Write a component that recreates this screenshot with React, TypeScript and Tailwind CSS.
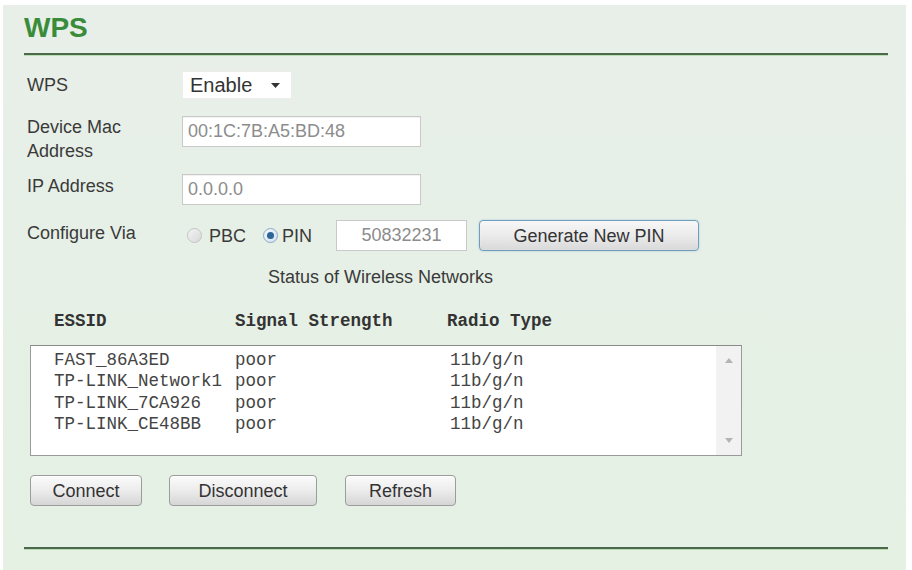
import React from "react";

const rows = [
  ["FAST_86A3ED", "poor", "11b/g/n"],
  ["TP-LINK_Network1", "poor", "11b/g/n"],
  ["TP-LINK_7CA926", "poor", "11b/g/n"],
  ["TP-LINK_CE48BB", "poor", "11b/g/n"],
];

function Btn({ w, ml, children }: { w: string; ml: string; children: React.ReactNode }) {
  return (
    <button
      className={`${w} ${ml} h-[31px] rounded-[4px] border border-[#9c9c9c] bg-gradient-to-b from-[#fbfbfb] via-[#ececec] to-[#d6d6d6] text-[18px] leading-none text-[#333] shadow-[inset_0_1px_0_#fff]`}
    >
      {children}
    </button>
  );
}

export default function App() {
  return (
    <div className="w-[912px] h-[570px] overflow-hidden bg-white pt-[5px] pl-[3px] pr-[6px] font-['Liberation_Sans',Arial,sans-serif] text-[#3a3a3a]">
      <div className="h-full bg-gradient-to-b from-[#e8efe9] to-[#e4f1e3] pl-[21px] pr-[18px] pt-[8px]">
        <div className="text-[28px] leading-[30px] font-bold text-[#3a8c3a]">WPS</div>
        <div className="mt-[10px] h-[3px] border-t-2 border-[#4d694d] bg-[#b9ddb0]" />

        {/* WPS row */}
        <div className="mt-[15px] flex items-center">
          <div className="w-[158px] pl-[3px] text-[18px] leading-[24px]">WPS</div>
          <div className="flex h-[28px] w-[110px] items-center justify-between border border-[#ececec] bg-white pl-[7px] pr-[11px] text-[20px] text-[#333]">
            <span>Enable</span>
            <svg width="9" height="5" viewBox="0 0 9 5">
              <path d="M0 0H9L4.5 5Z" fill="#333" />
            </svg>
          </div>
        </div>

        {/* Mac row */}
        <div className="mt-[16px] flex items-start">
          <div className="w-[158px] pl-[3px] text-[18px] leading-[24px]">
            Device Mac
            <br />
            Address
          </div>
          <div className="mt-[1px] flex h-[31px] w-[239px] items-center border border-[#c9c9c9] bg-white pl-[5px] text-[18px] text-[#8c8c8c] shadow-[inset_0_1px_1px_rgba(0,0,0,0.06)]">
            00:1C:7B:A5:BD:48
          </div>
        </div>

        {/* IP row */}
        <div className="mt-[11px] flex items-start">
          <div className="w-[158px] pl-[3px] text-[18px] leading-[24px]">IP Address</div>
          <div className="flex h-[31px] w-[239px] items-center border border-[#c9c9c9] bg-white pl-[5px] text-[18px] text-[#8c8c8c] shadow-[inset_0_1px_1px_rgba(0,0,0,0.06)]">
            0.0.0.0
          </div>
        </div>

        {/* Configure row */}
        <div className="mt-[15px] flex items-center">
          <div className="w-[158px] pl-[3px] pb-[5px] text-[18px] leading-[24px]">Configure Via</div>
          <div className="ml-[5px] h-[15px] w-[15px] rounded-full border border-[#c4c4c4] bg-gradient-to-br from-[#f4f4f4] to-[#d8d8d8]" />
          <span className="ml-[7px] text-[18px] leading-[24px]">PBC</span>
          <div className="ml-[17px] flex h-[15px] w-[15px] items-center justify-center rounded-full border border-[#8aa9c4] bg-gradient-to-br from-[#f4f8fb] to-[#d4e2ee]">
            <div className="h-[7px] w-[7px] rounded-full bg-[#2d6797]" />
          </div>
          <span className="ml-[4px] text-[18px] leading-[24px]">PIN</span>
          <div className="ml-[24px] flex h-[31px] w-[131px] items-center justify-center border border-[#c9c9c9] bg-white text-[18px] text-[#8c8c8c]">
            50832231
          </div>
          <button className="ml-[12px] h-[31px] w-[220px] rounded-[4px] border border-[#6f9dbb] bg-gradient-to-b from-[#f7f7f7] via-[#ebebeb] to-[#d9d9d9] text-[18px] leading-none text-[#333] shadow-[0_0_2px_#9cc4de,inset_0_0_1px_#fff]">
            Generate New PIN
          </button>
        </div>

        <div className="mt-[15px] ml-[244px] text-[18px] leading-[22px]">Status of Wireless Networks</div>

        {/* header */}
        <div className="mt-[22px] flex pl-[30px] font-['Liberation_Mono',monospace] text-[17.5px] leading-[22px] font-bold text-[#333]">
          <div className="w-[181px]">ESSID</div>
          <div className="w-[212px]">Signal Strength</div>
          <div>Radio Type</div>
        </div>

        {/* list */}
        <div className="mt-[13px] ml-[6px] flex h-[111px] w-[712px] border border-[#9a9a9a] border-t-[#8a8a8a] bg-white">
          <div className="flex-1 pt-[4px] pl-[23px] font-['Liberation_Mono',monospace] text-[17.5px] leading-[21.3px] text-[#444]">
            {rows.map((r) => (
              <div key={r[0]} className="flex whitespace-pre">
                <div className="w-[181px]">{r[0]}</div>
                <div className="w-[215px]">{r[1]}</div>
                <div>{r[2]}</div>
              </div>
            ))}
          </div>
          <div className="flex w-[25px] flex-col items-center justify-between bg-[#f2f2f2] py-[12px]">
            <svg width="8" height="5" viewBox="0 0 8 5">
              <path d="M0 5H8L4 0Z" fill="#b4b4b4" />
            </svg>
            <svg width="8" height="5" viewBox="0 0 8 5">
              <path d="M0 0H8L4 5Z" fill="#b4b4b4" />
            </svg>
          </div>
        </div>

        {/* buttons */}
        <div className="mt-[19px] flex">
          <Btn w="w-[112px]" ml="ml-[6px]">Connect</Btn>
          <Btn w="w-[148px]" ml="ml-[27px]">Disconnect</Btn>
          <Btn w="w-[111px]" ml="ml-[28px]">Refresh</Btn>
        </div>

        <div className="mt-[41px] h-[3px] border-t-2 border-[#4d694d] bg-[#b9ddb0]" />
      </div>
    </div>
  );
}
